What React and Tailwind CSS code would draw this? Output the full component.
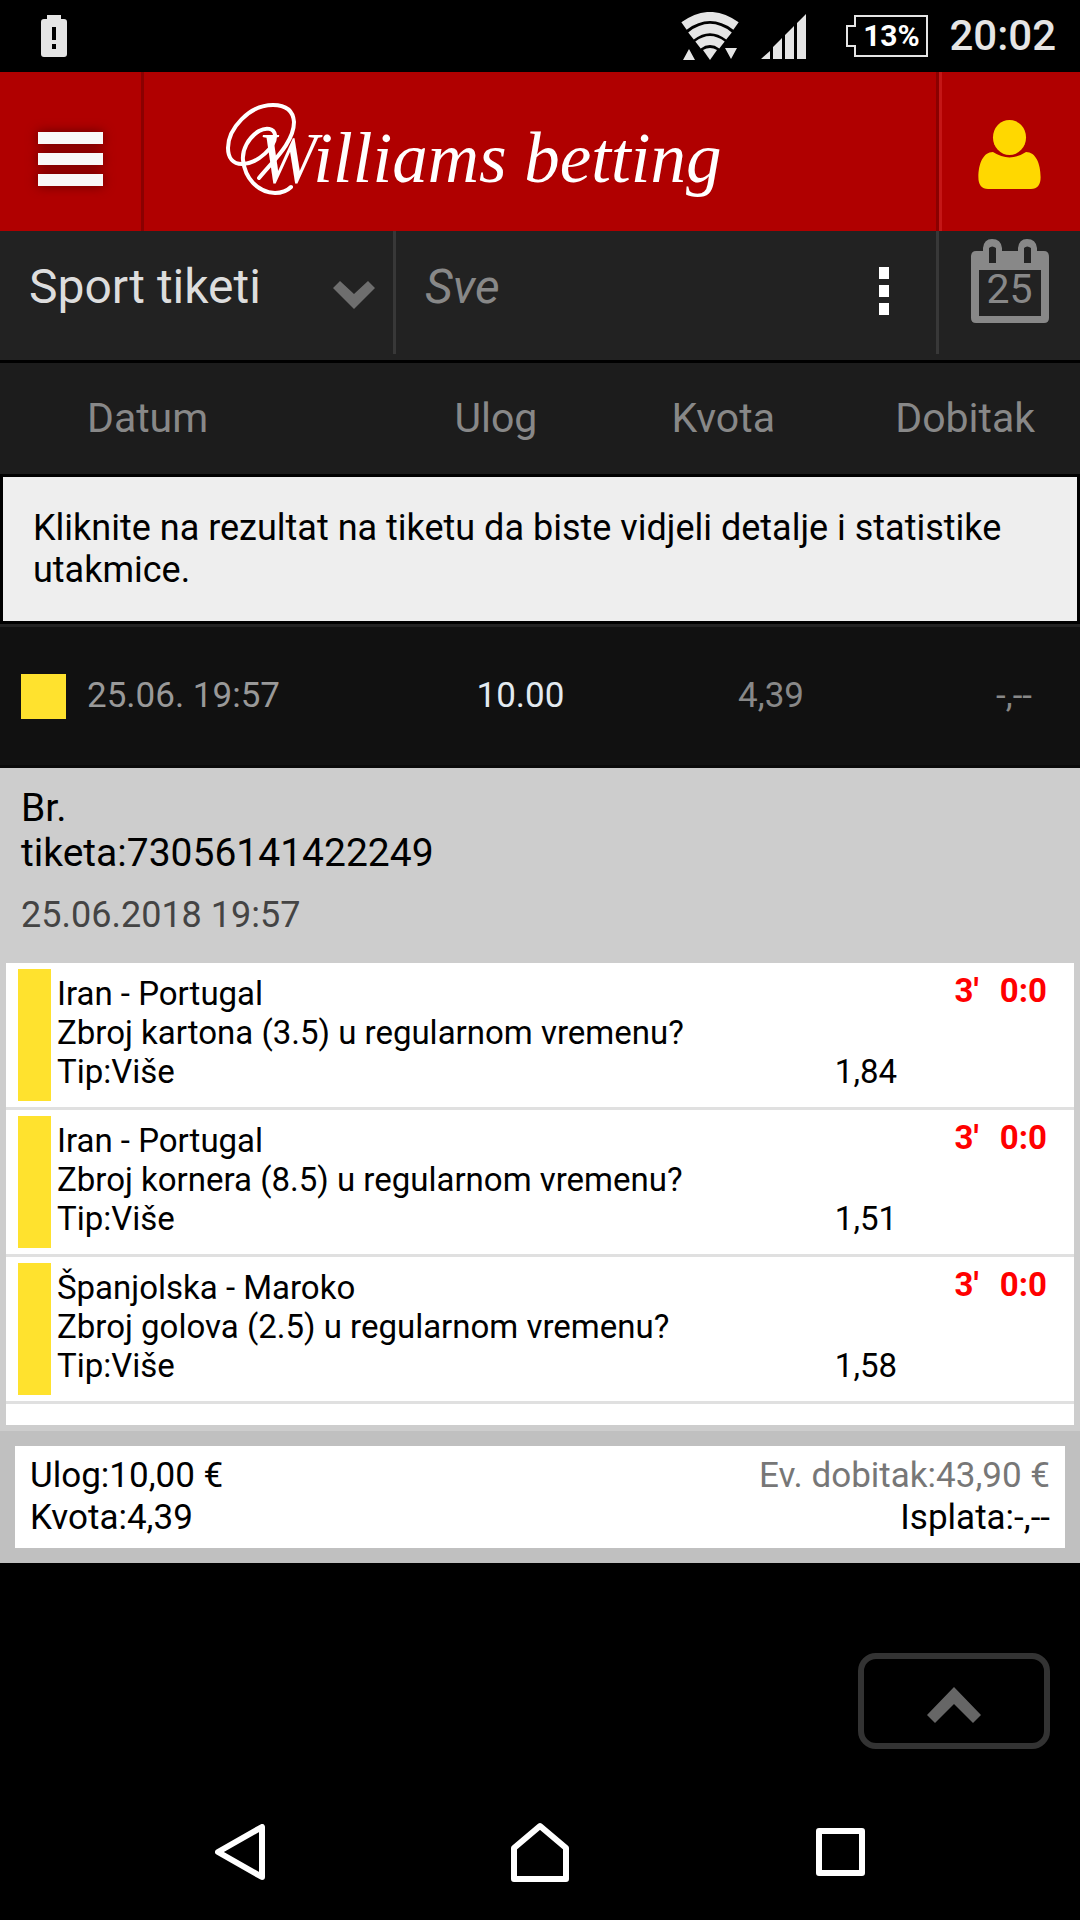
import React from 'react';

const COLUMNS = [
  { label: 'Datum', className: 'w-[36%] pl-[87px] text-left' },
  { label: 'Ulog', className: 'w-[17%] pr-[35px] text-right' },
  { label: 'Kvota', className: 'w-[22%] pr-[35px] text-right' },
  { label: 'Dobitak', className: 'w-[25%] pr-[45px] text-right' },
];

const BETS = [
  { match: 'Iran - Portugal', question: 'Zbroj kartona (3.5) u regularnom vremenu?', tip: 'Više', odds: '1,84', minute: "3'", score: '0:0' },
  { match: 'Iran - Portugal', question: 'Zbroj kornera (8.5) u regularnom vremenu?', tip: 'Više', odds: '1,51', minute: "3'", score: '0:0' },
  { match: 'Španjolska - Maroko', question: 'Zbroj golova (2.5) u regularnom vremenu?', tip: 'Više', odds: '1,58', minute: "3'", score: '0:0' },
];

const StatusBar = () => (
  <div className="flex h-[72px] items-center justify-between bg-black pl-[41px] pr-6 text-[#e5e5e5]">
    <svg className="h-[42px] w-[26px]" viewBox="0 0 26 42" fill="currentColor" fillRule="evenodd">
      <path d="M6 0h14v4h3a3 3 0 0 1 3 3v32a3 3 0 0 1-3 3H3a3 3 0 0 1-3-3V7a3 3 0 0 1 3-3h3zM11 12v13h4V12zM11 29v5h4v-5z" />
    </svg>
    <div className="flex items-center">
      {/* Wifi */}
      <svg className="mr-[22px] h-12 w-[58px]" viewBox="0 0 58 48" fill="none">
        <g stroke="#e5e5e5" strokeWidth="9">
          <path d="M3 14Q29-5 55 14" />
          <path d="M10 24Q29 9 48 24" />
          <path d="M17 33Q29 24 41 33" />
        </g>
        <path d="M22 38Q29 34 36 38L29 48z" fill="#e5e5e5" />
        <path d="M2 48L8 37L14 48zM44 36H56L50 47z" fill="#e5e5e5" />
      </svg>
      {/* Mobile signal */}
      <svg className="mr-10 h-[45px] w-[45px]" viewBox="0 0 45 45" fill="currentColor">
        <path d="M0 45L9 37V45zM12 33L21 24V45H12zM24 21L33 12V45H24zM36 9L45 0V45H36z" />
      </svg>
      <div className="relative mr-[21px] flex h-[42px] w-[82px] items-center justify-center pl-2">
        <svg className="absolute inset-0 h-full w-full" viewBox="0 0 82 42" fill="none" stroke="#e5e5e5" strokeWidth="2">
          <path d="M9 1H81V41H9V31H1V11H9z" />
        </svg>
        <span className="text-[30px] font-bold leading-none text-white">13%</span>
      </div>
      <span className="text-[42px] font-medium leading-none">20:02</span>
    </div>
  </div>
);

const Logo = () => (
  <svg className="h-[120px] w-[520px]" viewBox="216 92 520 120" role="img" aria-label="Williams betting">
    <path
      d="M259 178C274 160 294 142 294 122C293 109 284 105 273 105C249 105 228 129 228 148C228 158 233 164 242 164C258 164 276 146 275 135C274 128 266 127 259 131C248 138 242 150 243 160C245 178 257 192 275 193C281 193 287 191 291 187"
      fill="none"
      stroke="#fff"
      strokeWidth="4"
      strokeLinecap="round"
    />
    <text x="258" y="182" fill="#fff" className="font-['Liberation_Serif',serif] text-[71px] italic">
      Williams betting
    </text>
  </svg>
);

const TopBar = () => (
  <header className="grid h-[159px] grid-cols-[144px_1fr_144px] bg-[#b00000]">
    <button type="button" aria-label="Meni" className="flex items-center justify-center border-r-[3px] border-[#8a0000]">
      <svg className="h-[75px] w-[85px] drop-shadow-[0_0_6px_#600000]" viewBox="0 0 85 75" fill="#f8f8f8">
        <path d="M10 18H75V30H10zM10 39H75V51H10zM10 60H75V72H10z" />
      </svg>
    </button>
    <a href="#" className="flex items-center pl-[72px]">
      <Logo />
    </a>
    <button type="button" aria-label="Korisnik" className="flex items-center justify-center border-l-[3px] border-[#8a0000] pt-1 shadow-[inset_3px_0_0_#c41616]">
      <svg className="h-[70px] w-[63px]" viewBox="0 0 64 72" fill="#ffd800">
        <ellipse cx="32" cy="19" rx="17" ry="18" />
        <path d="M15 34Q32 45 49 34C59 34 64 46 64 60Q64 72 54 72H10Q0 72 0 60C0 46 5 34 15 34z" />
      </svg>
    </button>
  </header>
);

const Filters = () => (
  <div className="grid h-[132px] grid-cols-[396px_1fr_144px] border-b-[3px] border-black bg-[#222] pb-[6px]">
    <div className="relative border-r-[3px] border-[#383838]">
      <select aria-label="Vrsta tiketa" className="h-[111px] w-full appearance-none bg-transparent pl-[29px] text-[48px] text-[#ddd]">
        <option>Sport tiketi</option>
      </select>
      <svg className="pointer-events-none absolute right-[18px] top-[50px] h-7 w-[42px]" viewBox="0 0 42 28" fill="#6e6e6e">
        <path d="M0 7L7 0L21 13L35 0L42 7L21 28z" />
      </svg>
    </div>
    <div className="relative">
      <select aria-label="Filter" className="h-[111px] w-full appearance-none bg-transparent pl-[29px] text-[48px] italic text-[#888]">
        <option>Sve</option>
      </select>
      <svg className="pointer-events-none absolute right-[47px] top-9 h-12 w-[10px]" viewBox="0 0 10 48" fill="#fff">
        <path d="M0 0H10V12H0zM0 18H10V30H0zM0 36H10V48H0z" />
      </svg>
    </div>
    <button type="button" aria-label="Kalendar" className="relative flex items-start justify-center border-l-[3px] border-[#383838] pt-2">
      <svg className="h-[84px] w-[78px]" viewBox="0 0 78 84" fill="#888" fillRule="evenodd">
        <path d="M5 12H12V9Q13 0 21 0Q30 0 31 9V12H47V9Q48 0 56 0Q65 0 66 9V12H73Q78 12 78 18V79Q78 84 73 84H5Q0 84 0 79V18Q0 12 5 12zM18 9V24H25V9Q21 6 18 9zM53 9V24H60V9Q56 6 53 9zM8 31V77H70V31z" />
      </svg>
      <span className="absolute inset-x-0 top-9 text-center text-[41px] leading-[44px] text-[#888]">25</span>
    </button>
  </div>
);

const TicketTable = () => (
  <table className="w-full table-fixed border-collapse">
    <thead>
      <tr className="h-[111px] bg-[#1c1c1c] text-[41px] text-[#888]">
        {COLUMNS.map((col) => (
          <th key={col.label} scope="col" className={`font-normal ${col.className}`}>{col.label}</th>
        ))}
      </tr>
    </thead>
    <tbody>
      <tr>
        <td colSpan={4} className="p-0">
          <p className="border-[3px] border-black bg-[#eee] px-[30px] py-[30px] text-[36px] leading-[42px] text-black">
            Kliknite na rezultat na tiketu da biste vidjeli detalje i statistike utakmice.
          </p>
        </td>
      </tr>
      <tr className="h-[141px] border-b-[3px] border-t-[3px] border-b-[#0a0a0a] border-t-[#222] bg-[#111] text-[35px] text-[#888]">
        <td className="pl-[21px]">
          <div className="flex items-center gap-[21px] text-[#999]">
            <span className="size-[45px] bg-[#ffe22e]"></span>
            25.06. 19:57
          </div>
        </td>
        <td className="pr-2 text-right text-[#e3eaf0]">10.00</td>
        <td className="pr-[6px] text-right">4,39</td>
        <td className="pr-12 text-right">-,--</td>
      </tr>
    </tbody>
  </table>
);

const Bet = ({ bet }) => (
  <li className="flex h-[147px] border-b-[3px] border-[#e0e0e0] py-[6px] pl-3 text-[33px] leading-[39px] text-black">
    <span className="w-[33px] bg-[#ffe22e]"></span>
    <div className="flex-1 pl-[6px] pt-[5px]">
      <p>{bet.match}</p>
      <p>{bet.question}</p>
      <p>Tip:{bet.tip}</p>
    </div>
    <span className="self-start pt-[83px]">{bet.odds}</span>
    <a href="#" className="flex w-[177px] justify-end gap-[21px] self-start pr-[27px] pt-[2px] font-bold text-[#f00]">
      <span>{bet.minute}</span>
      <span>{bet.score}</span>
    </a>
  </li>
);

const TicketDetails = () => (
  <section className="bg-[#cdcdcd] text-black">
    <div className="px-[21px] pb-3 pt-[18px]">
      <h2 className="text-[39px] leading-[45px]">
        Br.<br />tiketa:73056141422249
      </h2>
      <p className="pt-[18px] text-[36px] leading-[42px] text-[#444]">25.06.2018 19:57</p>
    </div>
    <ul className="mx-[6px] mb-[6px] mt-[15px] bg-white pb-[21px]">
      {BETS.map((bet, i) => (
        <Bet key={i} bet={bet} />
      ))}
    </ul>
    <div className="bg-[#c0c0c0] p-[15px]">
      <div className="flex justify-between bg-white px-[15px] py-[9px] text-[35px] leading-[42px]">
        <div>
          <p>Ulog:10,00 €</p>
          <p>Kvota:4,39</p>
        </div>
        <div className="text-right">
          <p className="text-[#777]">Ev. dobitak:43,90 €</p>
          <p>Isplata:-,--</p>
        </div>
      </div>
    </div>
  </section>
);

const NavBar = () => (
  <nav className="grid h-[144px] grid-cols-[1fr_120px_1fr] items-center bg-black pt-2">
    <button type="button" aria-label="Natrag" className="justify-self-end pr-[215px]">
      <svg className="h-[56px] w-[50px]" viewBox="0 0 50 56" fill="none" stroke="#fff" strokeWidth="6" strokeLinejoin="round">
        <path d="M47 3V53L3 28z" />
      </svg>
    </button>
    <button type="button" aria-label="Početna" className="justify-self-center">
      <svg className="h-[60px] w-[58px]" viewBox="0 0 58 60" fill="none" stroke="#fff" strokeWidth="6" strokeLinejoin="round">
        <path d="M3 26L29 4L55 26V57H3z" />
      </svg>
    </button>
    <button type="button" aria-label="Nedavno" className="justify-self-start pl-[216px]">
      <svg className="h-[48px] w-[49px]" viewBox="0 0 49 48" fill="none" stroke="#fff" strokeWidth="6" strokeLinejoin="round">
        <path d="M3 3H46V45H3z" />
      </svg>
    </button>
  </nav>
);

export default function App() {
  return (
    <div className="flex min-h-screen flex-col bg-black font-['Roboto',sans-serif]">
      <StatusBar />
      <TopBar />
      <main className="flex-1">
        <Filters />
        <TicketTable />
        <TicketDetails />
        <div className="flex justify-end pb-[27px] pr-[30px] pt-[90px]">
          <button type="button" aria-label="Na vrh" className="flex h-24 w-48 items-center justify-center rounded-[18px] border-[6px] border-[#333] pt-2">
            <svg className="h-9 w-[54px]" viewBox="0 0 54 36" fill="#666">
              <path d="M27 0L54 28L46 36L27 17L8 36L0 28z" />
            </svg>
          </button>
        </div>
      </main>
      <NavBar />
    </div>
  );
}
